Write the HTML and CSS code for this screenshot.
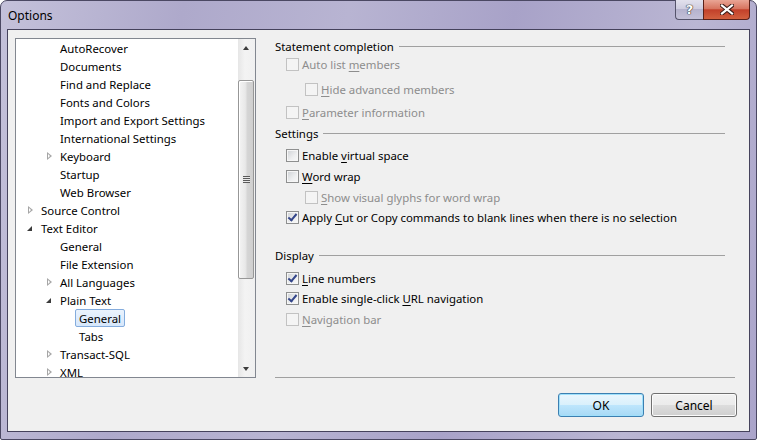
FILE: index.html
```html
<!DOCTYPE html>
<html lang="en">
<head>
  <meta charset="UTF-8">
  <title>Options</title>
  <link rel="stylesheet" href="styles.css">
</head>
<body>
  <div class="window">
    <div class="titlebar">
      <span class="title">Options</span>
      <div class="caption-buttons">
        <span class="cap help">?</span>
        <span class="cap close">
          <svg width="14" height="11" viewBox="0 0 14 11">
            <path d="M2 1.5 L12 9.5 M12 1.5 L2 9.5" stroke="#3a1a16" stroke-width="4.2" stroke-linecap="square"/>
            <path d="M2 1.5 L12 9.5 M12 1.5 L2 9.5" stroke="#fff" stroke-width="2.2" stroke-linecap="square"/>
          </svg>
        </span>
      </div>
    </div>

    <div class="client">
      <div class="main">
        <div class="tree">
          <ul class="tree-items">
            <li class="node l1"><span class="exp"></span><span class="label">AutoRecover</span></li>
            <li class="node l1"><span class="exp"></span><span class="label">Documents</span></li>
            <li class="node l1"><span class="exp"></span><span class="label">Find and Replace</span></li>
            <li class="node l1"><span class="exp"></span><span class="label">Fonts and Colors</span></li>
            <li class="node l1"><span class="exp"></span><span class="label">Import and Export Settings</span></li>
            <li class="node l1"><span class="exp"></span><span class="label">International Settings</span></li>
            <li class="node l1"><span class="exp closed"></span><span class="label">Keyboard</span></li>
            <li class="node l1"><span class="exp"></span><span class="label">Startup</span></li>
            <li class="node l1"><span class="exp"></span><span class="label">Web Browser</span></li>
            <li class="node l0"><span class="exp closed"></span><span class="label">Source Control</span></li>
            <li class="node l0"><span class="exp open"></span><span class="label">Text Editor</span></li>
            <li class="node l1"><span class="exp"></span><span class="label">General</span></li>
            <li class="node l1"><span class="exp"></span><span class="label">File Extension</span></li>
            <li class="node l1"><span class="exp closed"></span><span class="label">All Languages</span></li>
            <li class="node l1"><span class="exp open"></span><span class="label">Plain Text</span></li>
            <li class="node l2"><span class="exp"></span><span class="label selected">General</span></li>
            <li class="node l2"><span class="exp"></span><span class="label">Tabs</span></li>
            <li class="node l1"><span class="exp closed"></span><span class="label">Transact-SQL</span></li>
            <li class="node l1"><span class="exp closed"></span><span class="label">XML</span></li>
          </ul>
          <div class="vscroll">
            <div class="sb-btn up"></div>
            <div class="sb-track">
              <div class="sb-thumb"><span class="grip"></span></div>
            </div>
            <div class="sb-btn down"></div>
          </div>
        </div>

        <div class="page">
          <div class="group-title"><span>Statement completion</span><i class="rule"></i></div>
          <div class="opt disabled"><span class="cb"></span><span>Auto list <u>m</u>embers</span></div>
          <div class="opt sub disabled mt5"><span class="cb"></span><span><u>H</u>ide advanced members</span></div>
          <div class="opt disabled mt3"><span class="cb"></span><span><u>P</u>arameter information</span></div>

          <div class="group-title mt3"><span>Settings</span><i class="rule"></i></div>
          <div class="opt mt4"><span class="cb"></span><span>Enable <u>v</u>irtual space</span></div>
          <div class="opt mt1"><span class="cb"></span><span><u>W</u>ord wrap</span></div>
          <div class="opt sub disabled mt1"><span class="cb"></span><span><u>S</u>how visual glyphs for word wrap</span></div>
          <div class="opt"><span class="cb checked"></span><span>Apply <u>C</u>ut or Copy commands to blank lines when there is no selection</span></div>

          <div class="group-title mt20"><span>Display</span><i class="rule"></i></div>
          <div class="opt mt5"><span class="cb checked"></span><span><u>L</u>ine numbers</span></div>
          <div class="opt"><span class="cb checked"></span><span>Enable single-click <u>U</u>RL navigation</span></div>
          <div class="opt disabled mt1"><span class="cb"></span><span><u>N</u>avigation bar</span></div>
        </div>
      </div>

      <div class="buttons">
        <button class="btn default">OK</button>
        <button class="btn">Cancel</button>
      </div>
    </div>
  </div>
</body>
</html>
```

FILE: styles.css
```css
* {
  box-sizing: border-box;
}

body {
  margin: 0;
  font-family: "Noto Sans", "Open Sans", sans-serif;
  font-size: 11.4px;
  color: #000;
  background: #fff;
}

.window {
  width: 757px;
  height: 440px;
  border: 1px solid #4b4863;
  border-radius: 7px 7px 2px 2px;
  padding: 0 6px 7px 6px;
  display: flex;
  flex-direction: column;
  background: linear-gradient(100deg, #c4c1da 0%, #aea9cb 22%, #b8b4d2 42%, #a8a2c8 62%, #bab6d3 84%, #aaa4ca 100%);
}

.titlebar {
  height: 28px;
  display: flex;
  align-items: flex-start;
}

.title {
  line-height: 28px;
  padding: 1px 0 0 1px;
  font-size: 12px;
  color: #000;
}

.caption-buttons {
  margin-left: auto;
  margin-top: -1px;
  display: flex;
}

.cap {
  height: 20px;
  display: flex;
  align-items: center;
  justify-content: center;
  border: 1px solid #55536b;
  border-top: none;
}

.cap.help {
  width: 28px;
  border-right: none;
  border-radius: 0 0 0 4px;
  background: linear-gradient(#e2e1ed, #cfcde0 45%, #b5b2cd 50%, #c3c0d8);
  color: #fff;
  font-family: "DejaVu Sans", sans-serif;
  font-weight: bold;
  font-size: 13px;
  text-shadow: 0 0 1px #333, 0 0 1px #333, 0 0 1px #333;
}

.cap.close {
  width: 47px;
  border-radius: 0 0 4px 0;
  border-color: #5a2019;
  background: linear-gradient(#e9a595, #d77560 45%, #c2402a 52%, #d2603f);
}

.client {
  flex: 1;
  border: 1px solid #45425c;
  background: #f0f0f0;
  display: flex;
  flex-direction: column;
}

.main {
  display: flex;
  padding: 8px 0 0 7px;
}

.tree {
  width: 241px;
  height: 340px;
  border: 1px solid #828790;
  background: #fff;
  display: flex;
}

.tree-items {
  list-style: none;
  margin: 0;
  padding: 0;
  flex: 1;
  overflow: hidden;
}

.node {
  height: 18px;
  display: flex;
  align-items: center;
  white-space: nowrap;
}

.node.l0 { padding-left: 6px; }
.node.l1 { padding-left: 25px; }
.node.l2 { padding-left: 44px; }

.exp {
  width: 15px;
  height: 18px;
  flex: none;
  position: relative;
}

.exp.closed::before {
  content: "";
  position: absolute;
  left: 6px;
  top: 5px;
  width: 0;
  height: 0;
  border-style: solid;
  border-width: 4.5px 0 4.5px 5px;
  border-color: transparent transparent transparent #a6a6a6;
}

.exp.closed::after {
  content: "";
  position: absolute;
  left: 7px;
  top: 7px;
  width: 0;
  height: 0;
  border-style: solid;
  border-width: 2.5px 0 2.5px 2.5px;
  border-color: transparent transparent transparent #fff;
}

.exp.open::before {
  content: "";
  position: absolute;
  left: 5px;
  top: 7px;
  width: 0;
  height: 0;
  border-style: solid;
  border-width: 0 0 5px 5px;
  border-color: transparent transparent #3b3b3b transparent;
}

.label {
  height: 18px;
  line-height: 16px;
  padding: 1px 3px 0;
  border: 1px solid transparent;
  border-radius: 2px;
}

.label.selected {
  border-color: #84acdd;
  background: linear-gradient(#eaf3fd, #d6e7fb);
}

.vscroll {
  width: 17px;
  display: flex;
  flex-direction: column;
  background: linear-gradient(to right, #e6e6e6, #f3f3f3 40%, #f0f0f0);
}

.sb-btn {
  height: 17px;
  position: relative;
}

.sb-btn::before {
  content: "";
  position: absolute;
  left: 5px;
  width: 0;
  height: 0;
  border-style: solid;
  border-color: transparent;
}

.sb-btn.up::before {
  top: 7px;
  border-width: 0 3.5px 4px 3.5px;
  border-bottom-color: #3d3d3d;
}

.sb-btn.down::before {
  top: 7px;
  border-width: 4px 3.5px 0 3.5px;
  border-top-color: #3d3d3d;
}

.sb-track {
  flex: 1;
  padding-top: 24px;
}

.sb-thumb {
  height: 199px;
  margin: 0 1px 0 0;
  border: 1px solid #979797;
  border-radius: 2px;
  background: linear-gradient(to right, #f4f4f4, #e8e8e8 45%, #d5d5d5 60%, #cfcfcf);
  box-shadow: inset 1px 1px 0 #fff;
  display: flex;
  align-items: center;
  justify-content: center;
}

.grip {
  width: 7px;
  height: 7px;
  background: repeating-linear-gradient(#5a5a5a 0 1px, #e8e8e8 1px 2px);
}

.page {
  width: 460px;
  height: 340px;
  margin-left: 19px;
  border-bottom: 1px solid #a0a0a0;
}

.group-title {
  height: 16px;
  display: flex;
  align-items: center;
  padding-top: 1px;
}

.rule {
  flex: 1;
  height: 1px;
  margin: 0 10px 0 5px;
  background: #a0a0a0;
}

.opt {
  height: 20px;
  display: flex;
  align-items: center;
  padding-left: 11px;
  white-space: nowrap;
}

.opt > span:last-child {
  padding-top: 1px;
}

.opt.sub {
  padding-left: 30px;
}

.mt1 { margin-top: 1px; }
.mt3 { margin-top: 3px; }
.mt4 { margin-top: 4px; }
.mt5 { margin-top: 5px; }
.mt20 { margin-top: 20px; }

.cb {
  width: 13px;
  height: 13px;
  flex: none;
  margin-right: 3px;
  border: 1px solid #8e8f8f;
  background: linear-gradient(135deg, #cdd0d4, #eeeff0 60%, #f8f8f8);
  box-shadow: inset 0 0 0 1px #f6f6f6;
  position: relative;
}

.cb.checked::after {
  content: "";
  position: absolute;
  left: 3px;
  top: 0px;
  width: 3px;
  height: 7px;
  border: solid #34468a;
  border-width: 0 2px 2px 0;
  transform: rotate(40deg);
}

.opt.disabled {
  color: #8d8d8d;
}

.opt.disabled .cb {
  border-color: #c2c2c2;
  background: #f4f4f4;
  box-shadow: none;
}

u {
  text-underline-offset: 2px;
}

.buttons {
  display: flex;
  justify-content: flex-end;
  gap: 7px;
  margin-top: 15px;
  padding-right: 12px;
}

.btn {
  width: 86px;
  height: 24px;
  font-family: inherit;
  font-size: 12px;
  color: #000;
  border: 1px solid #707070;
  border-radius: 3px;
  background: linear-gradient(#f2f2f2, #ebebeb 50%, #dddddd 50%, #cfcfcf);
  box-shadow: inset 0 0 0 1px #fbfbfb;
  padding: 0;
}

.btn.default {
  border-color: #3c7fb1;
  background: linear-gradient(#eaf6fd, #d9f0fc 50%, #bee6fd 50%, #a7d9f5);
  box-shadow: inset 0 0 0 1px #9fe0fb;
}
```
